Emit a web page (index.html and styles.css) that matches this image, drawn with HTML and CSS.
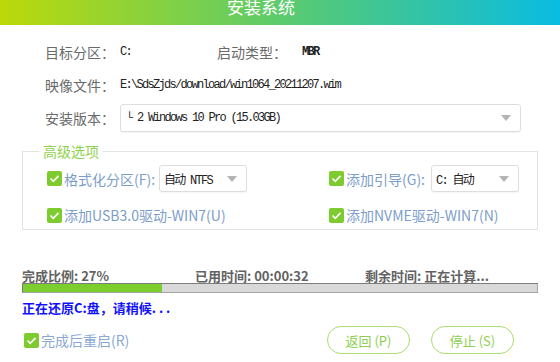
FILE: index.html
```html
<!DOCTYPE html>
<html lang="zh-CN">

<head>
  <meta charset="UTF-8">
  <title>安装系统</title>
  <link rel="stylesheet" href="styles.css">
</head>

<body>
  <div class="header">安装系统</div>

  <div class="info">
    <div class="row">
      <span class="label">目标分区：</span>
      <span class="value part">C:</span>
      <span class="label boot">启动类型：</span>
      <span class="value strong">MBR</span>
    </div>
    <div class="row">
      <span class="label">映像文件：</span>
      <span class="value">E:\SdsZjds/download/win1064_20211207.wim</span>
    </div>
    <div class="row select-row">
      <span class="label">安装版本：</span>
      <div class="select wide">
        <span class="value">└ 2 Windows 10 Pro (15.03GB)</span>
        <span class="arrow"></span>
      </div>
    </div>
  </div>

  <fieldset class="adv">
    <legend>高级选项</legend>
    <div class="adv-grid">
      <div class="opt">
        <span class="check"><svg viewBox="0 0 15 15" width="15" height="15"><path d="M3.5 7.5l2.8 2.8 5.2-5.4" fill="none" stroke="#fff" stroke-width="1.6"/></svg></span>
        <span class="opt-label left">格式化分区(F):</span>
        <div class="select small">
          <span class="value">自动 NTFS</span>
          <span class="arrow"></span>
        </div>
      </div>
      <div class="opt">
        <span class="check"><svg viewBox="0 0 15 15" width="15" height="15"><path d="M3.5 7.5l2.8 2.8 5.2-5.4" fill="none" stroke="#fff" stroke-width="1.6"/></svg></span>
        <span class="opt-label right">添加引导(G):</span>
        <div class="select small">
          <span class="value">C: 自动</span>
          <span class="arrow"></span>
        </div>
      </div>
      <div class="opt">
        <span class="check"><svg viewBox="0 0 15 15" width="15" height="15"><path d="M3.5 7.5l2.8 2.8 5.2-5.4" fill="none" stroke="#fff" stroke-width="1.6"/></svg></span>
        <span>添加USB3.0驱动-WIN7(U)</span>
      </div>
      <div class="opt">
        <span class="check"><svg viewBox="0 0 15 15" width="15" height="15"><path d="M3.5 7.5l2.8 2.8 5.2-5.4" fill="none" stroke="#fff" stroke-width="1.6"/></svg></span>
        <span>添加NVME驱动-WIN7(N)</span>
      </div>
    </div>
  </fieldset>

  <div class="progress">
    <div class="stats">
      <span>完成比例: 27%</span>
      <span>已用时间: 00:00:32</span>
      <span>剩余时间: 正在计算...</span>
    </div>
    <div class="bar">
      <div class="fill" style="width: 27%"></div>
    </div>
    <div class="status">正在还原C:盘，请稍候. . .</div>
  </div>

  <div class="footer">
    <div class="opt restart">
      <span class="check"><svg viewBox="0 0 15 15" width="15" height="15"><path d="M3.5 7.5l2.8 2.8 5.2-5.4" fill="none" stroke="#fff" stroke-width="1.6"/></svg></span>
      <span>完成后重启(R)</span>
    </div>
    <button class="btn first">返回 (P)</button>
    <button class="btn">停止 (S)</button>
  </div>
</body>

</html>
```

FILE: styles.css
```css
* {
  box-sizing: border-box;
}

body {
  margin: 0;
  width: 560px;
  height: 362px;
  overflow: hidden;
  background: #fff;
  font-family: "Noto Sans CJK SC", sans-serif;
  color: #6a6a6a;
}

.header {
  height: 25px;
  background: linear-gradient(to right, #bcd909, #5ccb6c 50%, #09bce2);
  color: #fff;
  font-size: 17px;
  line-height: 14px;
  text-align: center;
  padding-right: 38px;
}

.info {
  padding: 17px 0 0 45px;
}

.row {
  display: flex;
  align-items: center;
  height: 20px;
  font-size: 14px;
}

.row + .row {
  margin-top: 13px;
}

.row.select-row {
  height: 28px;
  margin-top: 9px;
}

.label {
  width: 75px;
  flex-shrink: 0;
}

.label.boot {
  width: 85px;
}

.value {
  font-family: "Liberation Mono", "Noto Sans CJK SC", monospace;
  font-size: 12px;
  letter-spacing: -1.7px;
  color: #222;
  white-space: nowrap;
}

.value.part {
  width: 97px;
}

.value.strong {
  font-weight: bold;
}

.select {
  display: flex;
  align-items: center;
  justify-content: space-between;
  border: 1px solid #dedede;
  border-radius: 3px;
  background: #fff;
  box-shadow: 0 1px 1px rgba(0, 0, 0, 0.04);
  padding: 0 9px 0 5px;
}

.select.wide {
  width: 401px;
  height: 28px;
}

.select.small {
  width: 88px;
  height: 27px;
  padding-left: 4px;
}

.arrow {
  width: 0;
  height: 0;
  border-left: 5px solid transparent;
  border-right: 5px solid transparent;
  border-top: 6px solid #b4b4b4;
}

.adv {
  margin: 10px 22px 0;
  border: 1px solid #e3e3e3;
  padding: 0 0 4px 24px;
  min-width: 0;
}

.adv legend {
  margin-left: -8px;
  padding: 0 4px;
  font-size: 14px;
  line-height: 18px;
  color: #8fd24e;
}

.adv-grid {
  display: grid;
  grid-template-columns: 282px 1fr;
  grid-template-rows: 27px 20px;
  row-gap: 13px;
  padding-top: 5px;
}

.opt {
  display: flex;
  align-items: center;
  font-size: 14px;
  color: #7d9dca;
  white-space: nowrap;
}

.check {
  display: flex;
  width: 15px;
  height: 15px;
  border-radius: 2px;
  background: #7ecb30;
  margin-right: 2px;
  flex-shrink: 0;
}

.opt-label.left {
  width: 95px;
}

.opt-label.right {
  width: 85px;
}

.progress {
  margin: 0 22px;
  padding-top: 38px;
}

.stats {
  display: grid;
  grid-template-columns: 173px 170px 1fr;
  font-size: 13px;
  line-height: 15px;
  font-weight: bold;
  color: #626262;
  white-space: nowrap;
}

.bar {
  height: 10px;
  border: 1px solid #a4a4a4;
  border-top-color: #7c7c7c;
  border-left-color: #7c7c7c;
  background: #d9d9d9;
}

.fill {
  height: 100%;
  background: #7ccd2e;
}

.status {
  margin-top: 7px;
  font-size: 13px;
  line-height: 16px;
  font-weight: bold;
  color: #1010ff;
}

.footer {
  display: flex;
  align-items: center;
  margin: 10px 46px 0 24px;
  height: 28px;
}

.restart {
  color: #8aa8d2;
}

.btn {
  width: 83px;
  height: 28px;
  border: 1px solid #a9e06e;
  border-radius: 14px;
  background: #fff;
  color: #8ccf50;
  font-family: "Noto Sans CJK SC", sans-serif;
  font-size: 13px;
  padding: 0;
  margin-left: 21px;
}

.btn.first {
  margin-left: auto;
}
```
